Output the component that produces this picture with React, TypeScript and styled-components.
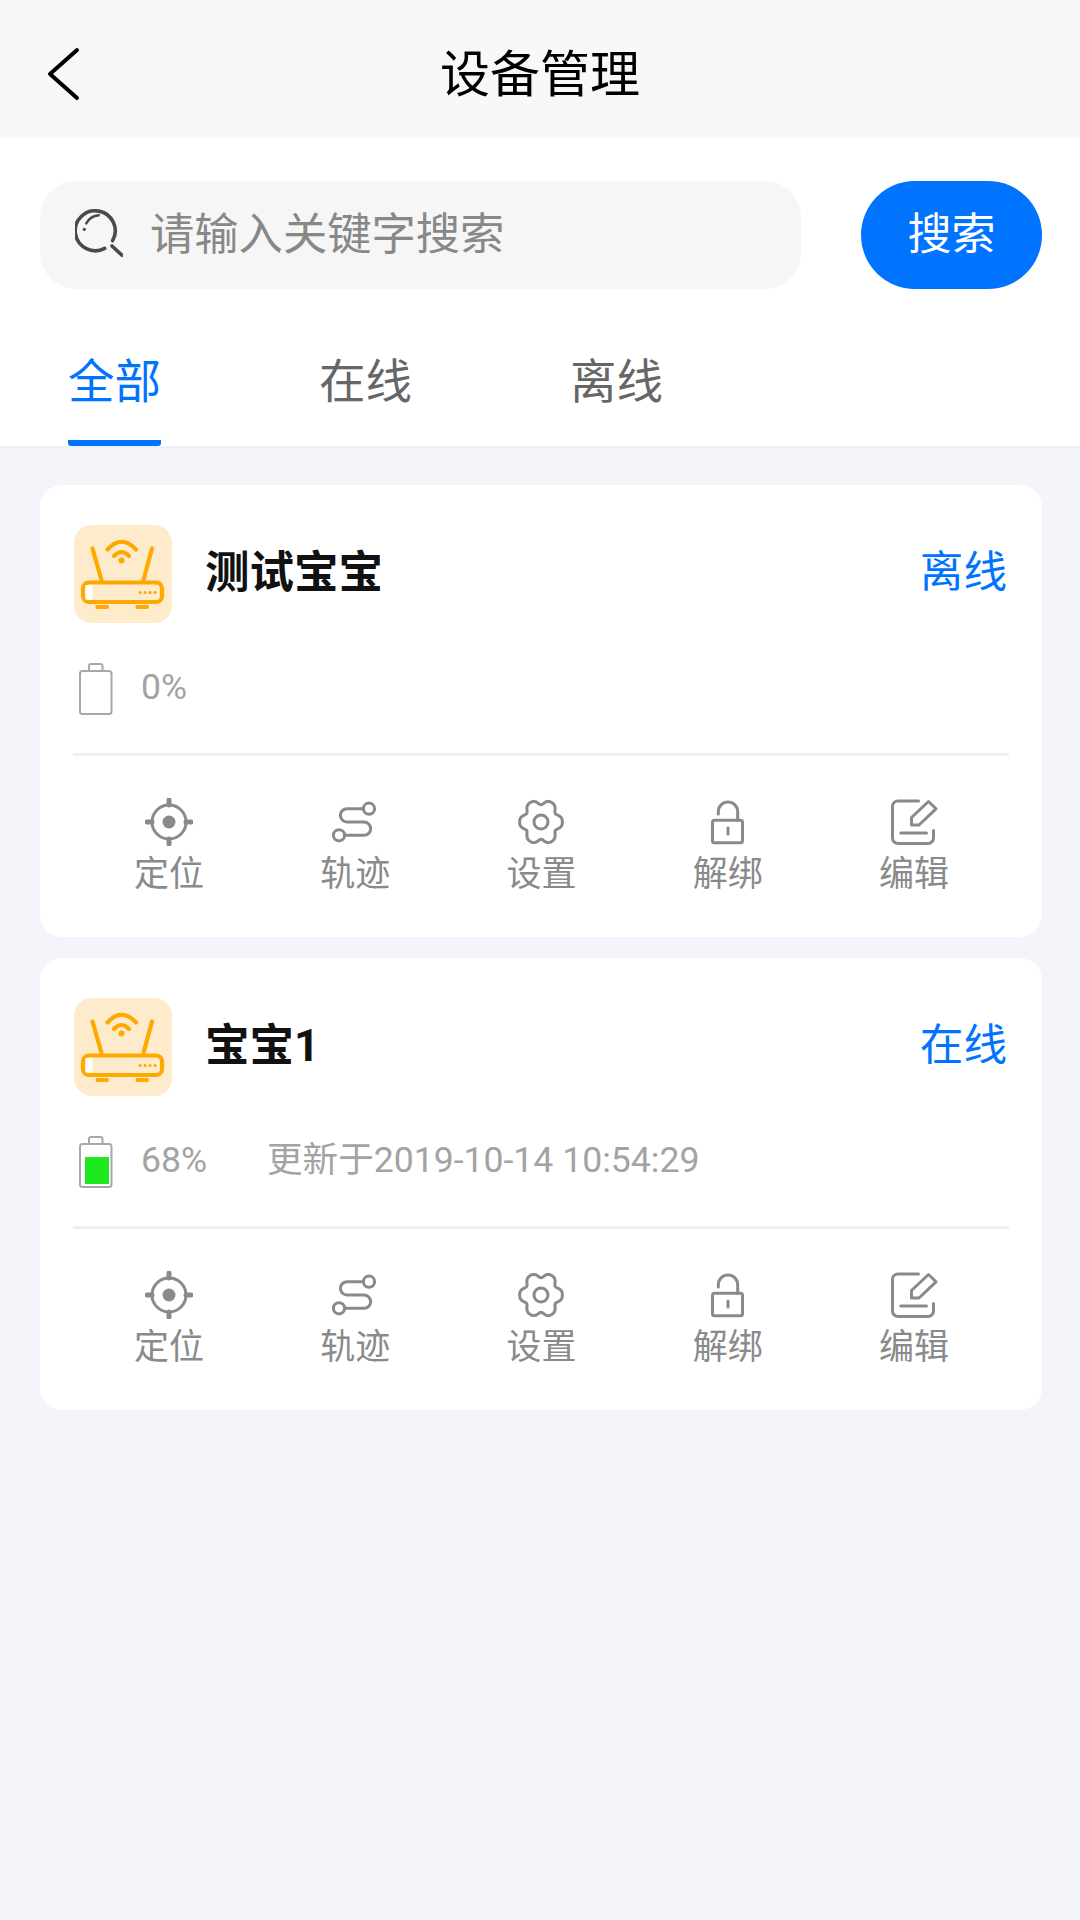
import React from "react";
import styled, { createGlobalStyle } from "styled-components";

const Global = createGlobalStyle`
  html, body { margin: 0; padding: 0; background: #f4f5fa; }
  body { font-family: Roboto, "Noto Sans CJK SC", sans-serif; }
  * { box-sizing: border-box; }
`;

const Page = styled.div`
  width: 1080px;
  min-height: 1920px;
  background: #f4f5fa;
  display: flex;
  flex-direction: column;
`;
const Header = styled.header`
  height: 138px;
  background: #f8f8f8;
  display: grid;
  grid-template-columns: 1fr auto 1fr;
  align-items: center;
  padding-top: 12px;
`;
const BackIcon = styled.svg`
  width: 34px;
  height: 54px;
  display: block;
  margin: 0 0 3px 46px;
`;
const Title = styled.h1`
  margin: 0;
  font-size: 50px;
  font-weight: 400;
  line-height: 60px;
  color: #000;
`;
const TopPanel = styled.section`
  background: #fff;
  display: flex;
  flex-direction: column;
  border-bottom: 2px solid #f0f1f5;
`;
const SearchRow = styled.div`
  display: flex;
  gap: 60px;
  padding: 43px 38px 0 40px;
`;
const SearchBox = styled.div`
  width: 761px;
  height: 108px;
  border-radius: 36px;
  background: #f6f6f6;
  display: flex;
  align-items: center;
  padding-left: 35px;
  gap: 27px;
`;
const SearchIcon = styled.svg`
  width: 48px;
  height: 52px;
  flex: none;
`;
const Placeholder = styled.span`
  font-size: 44.3px;
  line-height: 56px;
  color: #888;
`;
const SearchButton = styled.button`
  width: 181px;
  height: 108px;
  border: 0;
  border-radius: 54px;
  background: #0073ff;
  color: #fff;
  font: inherit;
  font-size: 44px;
  line-height: 56px;
  padding: 0;
`;
const Tabs = styled.nav`
  display: flex;
  gap: 158px;
  padding: 0 0 0 68px;
  margin-top: 63px;
`;
const Tab = styled.div<{ $active?: boolean }>`
  width: 93px;
  font-size: 46.5px;
  line-height: 60px;
  height: 94px;
  text-align: center;
  color: ${(p) => (p.$active ? "#0073ff" : "#666")};
  border-bottom: 6px solid ${(p) => (p.$active ? "#0073ff" : "transparent")};
  border-radius: 0 0 3px 3px;
  white-space: nowrap;
`;
const List = styled.main`
  display: flex;
  flex-direction: column;
  gap: 21px;
  padding: 37px 38px 0 40px;
`;
const Card = styled.article`
  height: 452px;
  background: #fff;
  border-radius: 22px;
  padding: 40px 33px 0;
  display: flex;
  flex-direction: column;
`;
const CardHead = styled.div`
  display: flex;
  align-items: center;
  height: 98px;
  padding: 0 2px 0 1px;
`;
const DeviceIcon = styled.svg`
  width: 98px;
  height: 98px;
  flex: none;
`;
const DeviceName = styled.h2`
  margin: 0 0 2px 33px;
  flex: 1;
  font-size: 44.5px;
  line-height: 56px;
  font-weight: 700;
  color: #111;
`;
const Status = styled.span`
  font-size: 43.6px;
  line-height: 56px;
  margin-bottom: 3px;
  color: #0073ff;
`;
const BatteryRow = styled.div`
  display: flex;
  align-items: center;
  height: 52px;
  margin-top: 40px;
  padding-left: 6px;
  font-size: 35.6px;
  color: #a3a3a3;
`;
const BatteryIcon = styled.svg`
  width: 34px;
  height: 52px;
  flex: none;
  margin-right: 28px;
`;
const Percent = styled.span`
  line-height: 40px;
  width: 126px;
  margin-bottom: 4px;
`;
const Updated = styled.span`
  line-height: 40px;
  margin-bottom: 4px;
`;
const Divider = styled.hr`
  border: 0;
  height: 3px;
  margin: 38px 0 0;
  background: #f0f0f0;
`;
const Actions = styled.div`
  display: grid;
  grid-template-columns: repeat(5, 1fr);
  margin-top: 42px;
  padding: 0 2px 0 3px;
`;
const Action = styled.div`
  display: flex;
  flex-direction: column;
  align-items: center;
`;
const ActionIcon = styled.svg`
  width: 48px;
  height: 48px;
  display: block;
`;
const ActionLabel = styled.span`
  font-size: 35px;
  line-height: 46px;
  margin-top: 6px;
  color: #8a8a8a;
`;

const G = "#8a8a8a";
const gearPath = (() => {
  const pts: string[] = [];
  for (let i = 0; i < 180; i++) {
    const t = (i / 180) * Math.PI * 2;
    const r = 20.4 + 2.6 * Math.cos(6 * t) - 0.5 * Math.cos(12 * t);
    pts.push(`${(24 + 0.95 * r * Math.cos(t)).toFixed(2)} ${(24 + r * Math.sin(t)).toFixed(2)}`);
  }
  return `M${pts.join("L")}Z`;
})();

const Locate = () => (
  <ActionIcon viewBox="0 0 48 48" fill="none" stroke={G} strokeWidth="3">
    <circle cx="24" cy="24" r="17" />
    <circle cx="24" cy="24" r="6.5" fill={G} stroke="none" />
    <path d="M24 2v5M24 41v5M2 24h5M41 24h5" strokeWidth="5" strokeLinecap="round" />
  </ActionIcon>
);
const Track = () => (
  <ActionIcon viewBox="0 0 48 48" fill="none" stroke={G} strokeWidth="3">
    <circle cx="38" cy="10.7" r="5.6" />
    <circle cx="8" cy="37.3" r="5.6" />
    <path d="M32 10.7H16a6.65 6.65 0 0 0 0 13.3H33a6.65 6.65 0 0 1 0 13.3H13.5" strokeLinecap="round" />
  </ActionIcon>
);
const Gear = () => (
  <ActionIcon viewBox="0 0 48 48" fill="none" stroke={G} strokeWidth="3">
    <path d={gearPath} strokeLinejoin="round" />
    <circle cx="24" cy="24" r="7" />
  </ActionIcon>
);
const Lock = () => (
  <ActionIcon viewBox="0 0 48 48" fill="none" stroke={G} strokeWidth="3">
    <rect x="8.5" y="22.3" width="30" height="22.4" rx="2" />
    <path d="M14.3 16v-2.3a9.7 9.7 0 0 1 19.4 0v8.5" strokeLinecap="round" />
    <path d="M24 30v6" strokeLinecap="round" />
  </ActionIcon>
);
const Edit = () => (
  <ActionIcon viewBox="0 0 48 48" fill="none" stroke={G} strokeWidth="3">
    <path d="M28.5 3H8a5.5 5.5 0 0 0-5.5 5.5V40a5.5 5.5 0 0 0 5.5 5.5H38a5.5 5.5 0 0 0 5.5-5.5V32.5" strokeLinecap="round" />
    <path d="M21.5 27V19.5L38.5 3.5L46 10.8L29 27Z" strokeLinejoin="round" />
    <path d="M10.8 35H36.5" strokeLinecap="round" />
  </ActionIcon>
);

const Router = () => (
  <DeviceIcon viewBox="0 0 98 98" fill="none">
    <rect x="0" y="0" width="98" height="98" rx="18" fill="#feebcb" />
    <g stroke="#ffa800" strokeWidth="4.2" strokeLinecap="round">
      <path d="M18.5 23.5L27.5 55M78 23.5L69.5 55" />
      <path d="M33.5 24.5Q47.5 9 62 24.5M40 31Q47.5 23 55 31" />
      <rect x="9" y="57.5" width="79" height="19.5" rx="6" fill="#feebcb" />
      <rect x="11.5" y="60" width="7" height="14.5" fill="#fff" stroke="none" />
      <path d="M23.5 82H33M63.5 82H73" />
      <path d="M66 67.5h.1M71 67.5h.1M76 67.5h.1M81 67.5h.1" strokeWidth="3" />
    </g>
    <circle cx="47.5" cy="35.5" r="3" fill="#ffa800" />
  </DeviceIcon>
);

const Battery = ({ level }: { level: number }) => {
  const h = (27 * level) / 68;
  return (
    <BatteryIcon viewBox="0 0 34 52" fill="none" stroke="#a8a8a8" strokeWidth="2">
      <rect x="1" y="8" width="31.5" height="43" rx="2.5" />
      <path d="M10 8V3a2 2 0 0 1 2-2h9.5a2 2 0 0 1 2 2v5" />
      {level > 0 && <rect x="6" y={48 - h} width="24" height={h} fill="#1ee81e" stroke="none" />}
    </BatteryIcon>
  );
};

const actions = [
  { label: "定位", Icon: Locate },
  { label: "轨迹", Icon: Track },
  { label: "设置", Icon: Gear },
  { label: "解绑", Icon: Lock },
  { label: "编辑", Icon: Edit },
];

const devices = [
  { name: "测试宝宝", status: "离线", level: 0, updated: "" },
  { name: "宝宝1", status: "在线", level: 68, updated: "更新于2019-10-14 10:54:29" },
];

export default function App() {
  return (
    <Page>
      <Global />
      <Header>
        <BackIcon viewBox="0 0 34 54" fill="none" stroke="#000" strokeWidth="4" strokeLinecap="round" strokeLinejoin="round">
          <path d="M31 3L4 27L31 51" />
        </BackIcon>
        <Title>设备管理</Title>
      </Header>
      <TopPanel>
        <SearchRow>
          <SearchBox>
            <SearchIcon viewBox="0 0 48 52" fill="none" stroke="#4a4a4a" strokeWidth="3.6" strokeLinecap="round">
              <path d="M37.6 31.7A20 20 0 1 0 29.7 39.4" />
              <path d="M37 37L47 46.3" />
              <path d="M23.7 6.3A16 16 0 0 0 11.3 14.3" strokeWidth="2.6" />
              <circle cx="9.3" cy="20.3" r="1.6" fill="#4a4a4a" stroke="none" />
            </SearchIcon>
            <Placeholder>请输入关键字搜索</Placeholder>
          </SearchBox>
          <SearchButton>搜索</SearchButton>
        </SearchRow>
        <Tabs>
          <Tab $active>全部</Tab>
          <Tab>在线</Tab>
          <Tab>离线</Tab>
        </Tabs>
      </TopPanel>
      <List>
        {devices.map((d) => (
          <Card key={d.name}>
            <CardHead>
              <Router />
              <DeviceName>{d.name}</DeviceName>
              <Status>{d.status}</Status>
            </CardHead>
            <BatteryRow>
              <Battery level={d.level} />
              <Percent>{d.level}%</Percent>
              {d.updated && <Updated>{d.updated}</Updated>}
            </BatteryRow>
            <Divider />
            <Actions>
              {actions.map(({ label, Icon }) => (
                <Action key={label}>
                  <Icon />
                  <ActionLabel>{label}</ActionLabel>
                </Action>
              ))}
            </Actions>
          </Card>
        ))}
      </List>
    </Page>
  );
}
